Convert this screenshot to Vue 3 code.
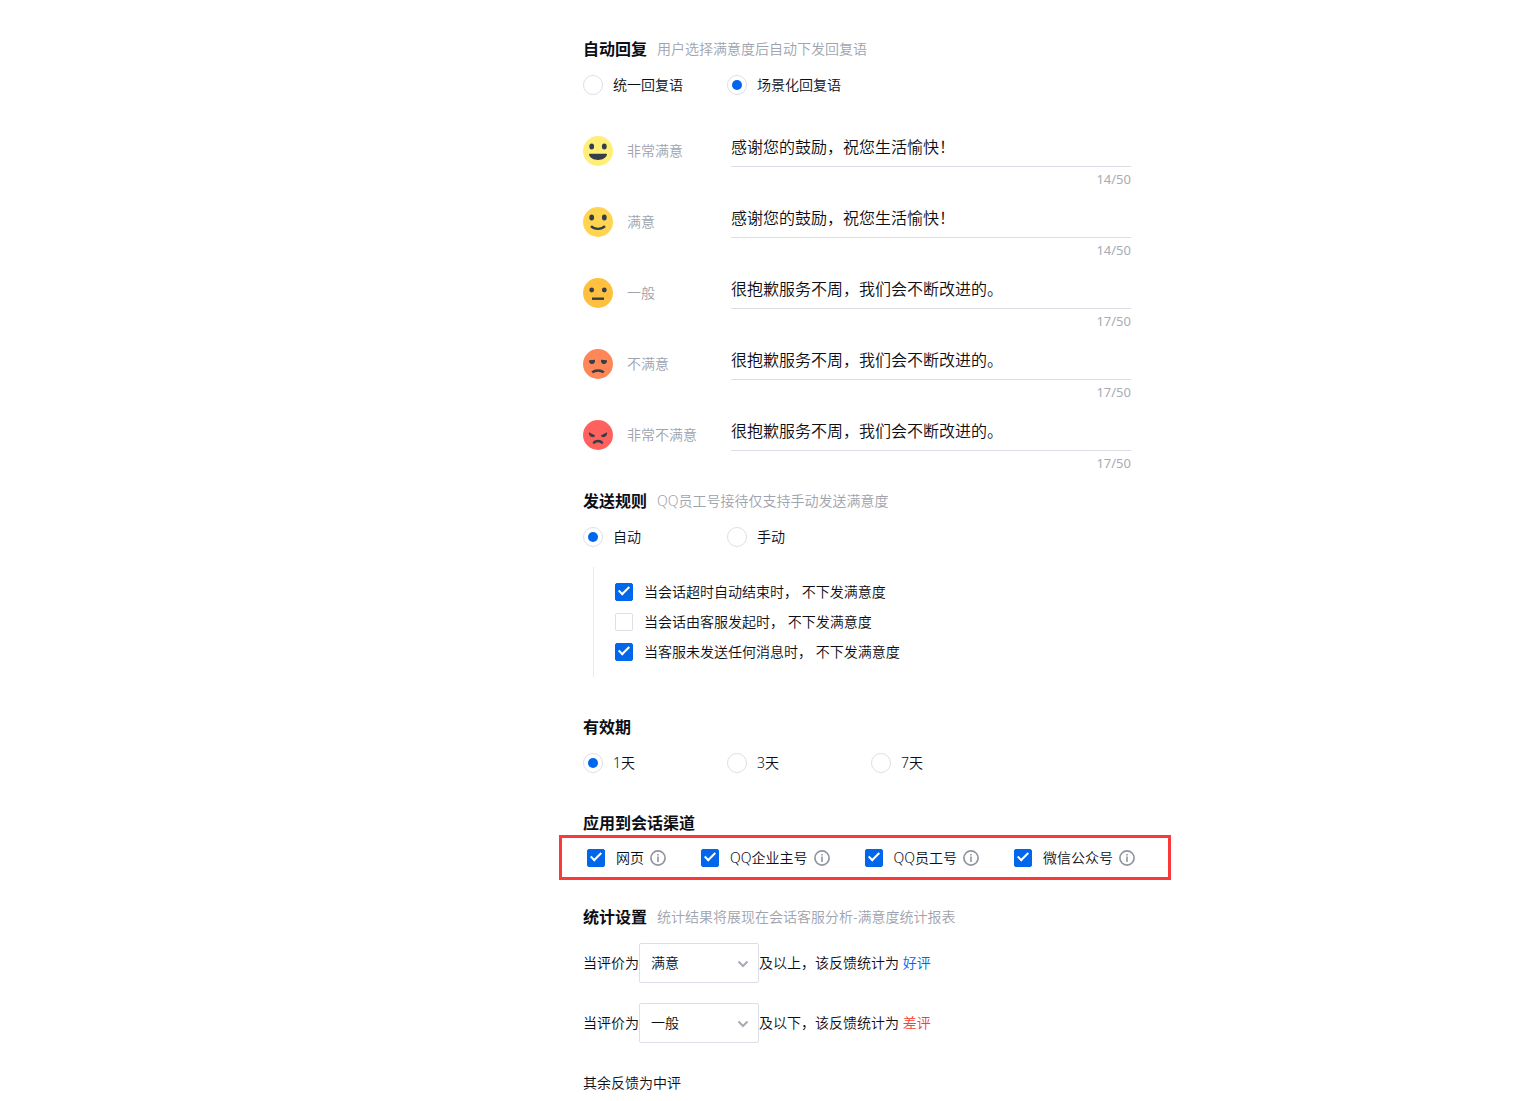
<template>
  <main class="settings">
    <section class="section">
      <div class="section-head">
        <h2>自动回复</h2>
        <span class="hint">用户选择满意度后自动下发回复语</span>
      </div>
      <div class="radio-row">
        <label v-for="item in replyModes" :key="item" class="radio-item">
          <input v-model="replyMode" type="radio" name="reply-mode" :value="item" />
          <span>{{ item }}</span>
        </label>
      </div>
      <ul class="reply-list">
        <li v-for="(reply, index) in replies" :key="reply.label" class="reply-row">
          <label class="reply-label" :for="`reply-${index}`">
            <svg class="face" viewBox="0 0 30 30" aria-hidden="true">
              <circle cx="15" cy="15" r="15" :fill="reply.color" />
              <path :d="reply.eyes" fill="#333e48" />
              <path v-if="reply.open" :d="reply.mouth" fill="#333e48" />
              <path v-else :d="reply.mouth" fill="none" stroke="#333e48" stroke-width="2.4" />
            </svg>
            <span>{{ reply.label }}</span>
          </label>
          <div class="reply-field">
            <input :id="`reply-${index}`" v-model="reply.text" type="text" maxlength="50" />
            <span class="count">{{ reply.text.length }}/50</span>
          </div>
        </li>
      </ul>
    </section>

    <section class="section section-rules">
      <div class="section-head">
        <h2>发送规则</h2>
        <span class="hint">QQ员工号接待仅支持手动发送满意度</span>
      </div>
      <div class="radio-row">
        <label v-for="item in sendModes" :key="item" class="radio-item">
          <input v-model="sendMode" type="radio" name="send-mode" :value="item" />
          <span>{{ item }}</span>
        </label>
      </div>
      <div class="rule-list">
        <label v-for="rule in rules" :key="rule.label" class="check-item">
          <input v-model="rule.checked" type="checkbox" />
          <span>{{ rule.label }}</span>
        </label>
      </div>
    </section>

    <section class="section section-spaced">
      <div class="section-head">
        <h2>有效期</h2>
      </div>
      <div class="radio-row">
        <label v-for="item in periods" :key="item" class="radio-item">
          <input v-model="period" type="radio" name="period" :value="item" />
          <span>{{ item }}</span>
        </label>
      </div>
    </section>

    <section class="section section-spaced">
      <div class="section-head section-head-tight">
        <h2>应用到会话渠道</h2>
      </div>
      <div class="channels">
        <div v-for="channel in channels" :key="channel.label" class="channel">
          <label class="check-item">
            <input v-model="channel.checked" type="checkbox" />
            <span>{{ channel.label }}</span>
          </label>
          <svg class="info" viewBox="0 0 16 16" aria-hidden="true">
            <circle cx="8" cy="8" r="7.1" fill="none" stroke="#92959f" stroke-width="1.7" />
            <path d="M7.2 4h1.6v1.5H7.2zM7.2 6.6h1.6V12H7.2z" fill="#92959f" />
          </svg>
        </div>
      </div>
    </section>

    <section class="section section-stats">
      <div class="section-head">
        <h2>统计设置</h2>
        <span class="hint">统计结果将展现在会话客服分析-满意度统计报表</span>
      </div>
      <div class="stat-list">
        <div v-for="stat in stats" :key="stat.id" class="stat-row">
          <label :for="stat.id">当评价为</label>
          <div class="select">
            <select :id="stat.id" v-model="stat.value">
              <option v-for="reply in replies" :key="reply.label">{{ reply.label }}</option>
            </select>
            <svg class="chevron" viewBox="0 0 12 8" aria-hidden="true">
              <path d="M1.5 1.5L6 6l4.5-4.5" fill="none" stroke="#a8abb5" stroke-width="2" />
            </svg>
          </div>
          <p>{{ stat.suffix }} <span :class="stat.type">{{ stat.result }}</span></p>
        </div>
        <p class="stat-note">其余反馈为中评</p>
      </div>
    </section>
  </main>
</template>

<script setup>
import { ref } from 'vue';

const replyModes = ['统一回复语', '场景化回复语'];
const replyMode = ref('场景化回复语');

const sendModes = ['自动', '手动'];
const sendMode = ref('自动');

const periods = ['1天', '3天', '7天'];
const period = ref('1天');

const roundEyes = 'M6.3 10.5a2.4 3 0 1 0 4.8 0a2.4 3 0 1 0-4.8 0zM18.9 10.5a2.4 3 0 1 0 4.8 0a2.4 3 0 1 0-4.8 0z';

const replies = ref([
  {
    label: '非常满意',
    text: '感谢您的鼓励，祝您生活愉快！',
    color: '#ffee78',
    eyes: roundEyes,
    mouth: 'M7 17.8h16c.8 0 1.1.5.9 1.2C22.9 22 19.5 23.9 15 23.9S7.1 22 6.1 19c-.2-.7.1-1.2.9-1.2z',
    open: true,
  },
  {
    label: '满意',
    text: '感谢您的鼓励，祝您生活愉快！',
    color: '#ffd450',
    eyes: roundEyes,
    mouth: 'M8 19.2C11.5 22.7 18.5 22.7 22 19.2',
  },
  {
    label: '一般',
    text: '很抱歉服务不周，我们会不断改进的。',
    color: '#ffc040',
    eyes: 'M6.3 12a2.4 2.4 0 1 0 4.8 0a2.4 2.4 0 1 0-4.8 0zM18.9 12a2.4 2.4 0 1 0 4.8 0a2.4 2.4 0 1 0-4.8 0z',
    mouth: 'M9 20.7h12',
  },
  {
    label: '不满意',
    text: '很抱歉服务不周，我们会不断改进的。',
    color: '#ff8657',
    eyes: 'M6.1 11.2l5.9-.4c.3 2.5-.7 4.2-2.9 4.2s-3.2-1.6-3-3.8zM23.9 11.2l-5.9-.4c-.3 2.5.7 4.2 2.9 4.2s3.2-1.6 3-3.8z',
    mouth: 'M9.2 23.4C12.2 20.9 17.8 20.9 20.8 23.4',
  },
  {
    label: '非常不满意',
    text: '很抱歉服务不周，我们会不断改进的。',
    color: '#ff625d',
    eyes: 'M5.9 12.2l6.3 3.4c-.7 1.5-2.4 1.9-3.9 1.2C6.6 16.1 5.6 14.3 5.9 12.2zM24.1 12.2l-6.3 3.4c.7 1.5 2.4 1.9 3.9 1.2C23.4 16.1 24.4 14.3 24.1 12.2z',
    mouth: 'M10.4 23.5C12.3 20.2 17.7 20.2 19.6 23.5',
  },
]);

const rules = ref([
  { label: '当会话超时自动结束时， 不下发满意度', checked: true },
  { label: '当会话由客服发起时， 不下发满意度', checked: false },
  { label: '当客服未发送任何消息时， 不下发满意度', checked: true },
]);

const channels = ref([
  { label: '网页', checked: true },
  { label: 'QQ企业主号', checked: true },
  { label: 'QQ员工号', checked: true },
  { label: '微信公众号', checked: true },
]);

const stats = ref([
  { id: 'stat-good', value: '满意', suffix: '及以上，该反馈统计为', result: '好评', type: 'good' },
  { id: 'stat-bad', value: '一般', suffix: '及以下，该反馈统计为', result: '差评', type: 'bad' },
]);
</script>

<style>
body {
  margin: 0;
  background: #fff;
}
</style>

<style scoped>
.settings {
  max-width: 588px;
  margin-left: 583px;
  padding: 37px 0 6px;
  font-family: "Noto Sans", "Noto Sans CJK SC", sans-serif;
  font-size: 14px;
  font-weight: 350;
  line-height: 24px;
  color: #0c0e16;
}
h2,
p,
ul {
  margin: 0;
  padding: 0;
}
input,
select {
  box-sizing: border-box;
  margin: 0;
  font-family: inherit;
  font-weight: inherit;
  color: inherit;
  appearance: none;
}
.section-rules {
  margin-top: 7px;
}
.section-spaced {
  margin-top: 38px;
}
.section-stats {
  margin-top: 25px;
}
.section-head {
  display: flex;
  align-items: center;
  gap: 10px;
  height: 24px;
  margin-bottom: 14px;
}
.section-head-tight {
  margin-bottom: 0;
}
h2 {
  font-size: 16px;
  font-weight: 700;
}
.hint {
  color: #a0a3ad;
}
.radio-row {
  display: flex;
}
.radio-item {
  display: flex;
  align-items: center;
  gap: 10px;
  width: 144px;
  height: 20px;
}
.radio-item input {
  display: grid;
  place-items: center;
  width: 20px;
  height: 20px;
  border: 1px solid #dcdfe8;
  border-radius: 50%;
  background: #fff;
}
.radio-item input:checked::after {
  content: "";
  width: 10px;
  height: 10px;
  border-radius: 50%;
  background: #0067ed;
}
.reply-list {
  margin-top: 32px;
  list-style: none;
}
.reply-row {
  display: flex;
  align-items: flex-start;
  height: 71px;
}
.reply-label {
  display: flex;
  align-items: center;
  gap: 14px;
  width: 148px;
  height: 48px;
  color: #a0a3ad;
}
.face {
  width: 30px;
  height: 30px;
}
.reply-field {
  display: flex;
  flex-direction: column;
  flex: 0 1 400px;
}
.reply-field input {
  width: 100%;
  height: 40px;
  padding: 0 0 2px;
  border: 0;
  border-bottom: 1px solid #dcdde5;
  background: none;
  font-size: 16px;
}
.count {
  font-size: 13px;
  font-weight: 400;
  text-align: right;
  color: #a8abb5;
}
.rule-list {
  margin: 20px 0 0 10px;
  padding: 10px 0 10px 21px;
  border-left: 1px solid #e8e9ee;
}
.check-item {
  display: flex;
  align-items: center;
  gap: 11px;
  height: 30px;
}
.check-item input {
  position: relative;
  width: 18px;
  height: 18px;
  border: 1px solid #dcdfe8;
  border-radius: 2px;
  background: #fff;
}
.check-item input:checked {
  border-color: #0067ed;
  background: #0067ed;
}
.check-item input:checked::after {
  content: "";
  position: absolute;
  top: 0;
  left: 5px;
  box-sizing: border-box;
  width: 6px;
  height: 11px;
  border: solid #fff;
  border-width: 0 2px 2px 0;
  transform: rotate(45deg);
}
.channels {
  display: flex;
  align-items: center;
  gap: 35px;
  box-sizing: border-box;
  height: 45px;
  margin-left: -24px;
  padding-left: 25px;
  border: 3px solid #fa3a3a;
}
.channel {
  display: flex;
  align-items: center;
  gap: 6px;
}
.info {
  width: 16px;
  height: 16px;
}
.stat-list {
  display: flex;
  flex-direction: column;
  gap: 20px;
}
.stat-row {
  display: flex;
  align-items: center;
}
.select {
  position: relative;
  width: 120px;
  height: 40px;
}
.select select {
  width: 100%;
  height: 100%;
  padding: 0 28px 2px 11px;
  border: 1px solid #dcdfe8;
  border-radius: 2px;
  background: #fff;
  font-size: 14px;
}
.chevron {
  position: absolute;
  top: 17px;
  right: 10px;
  width: 12px;
  height: 8px;
  pointer-events: none;
}
.stat-note {
  line-height: 40px;
}
.good {
  color: #0067ed;
}
.bad {
  color: #fa3e32;
}
</style>
